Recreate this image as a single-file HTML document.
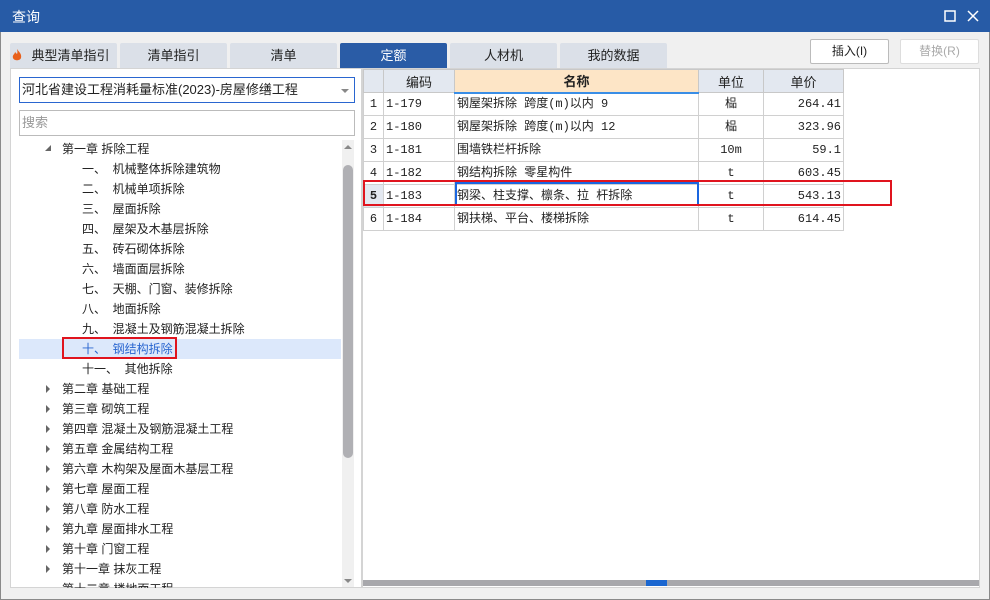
<!DOCTYPE html>
<html><head><meta charset="utf-8"><style>
*{box-sizing:border-box;margin:0;padding:0}
body{width:990px;height:600px;background:#f0f0f0;font-family:"Liberation Sans","Noto Sans CJK SC",sans-serif;font-size:12px;color:#222;position:relative;overflow:hidden}
.abs{position:absolute}
.title{left:0;top:0;width:990px;height:32px;background:#275ba6;color:#fff;font-size:14px;line-height:34px;padding-left:12px}
.tab{top:43px;height:25px;width:107px;background:#dbe0e8;text-align:center;line-height:25px;font-size:13px;border-radius:2px 2px 0 0}
.tab.on{background:#2a5ca6;color:#fff}
.btn{top:39px;width:79px;height:25px;border:1px solid #bbb;background:#fff;border-radius:2px;text-align:center;line-height:23px;font-size:12px}
.tree div{position:absolute;height:20px;line-height:20px;font-size:12px;white-space:nowrap}
table{border-collapse:collapse;position:absolute;left:363px;top:69px;table-layout:fixed}
td{border:1px solid #d0d0d0;height:23px;line-height:21px;font-size:12px;padding:0 2px;font-family:"Liberation Mono","Noto Sans CJK SC",monospace;overflow:hidden;white-space:nowrap}
th{border:1px solid #c8c8c8;height:23px;font-weight:normal;background:#e3e8f0;font-size:13px}
.arr{position:absolute;width:0;height:0;border-top:4px solid transparent;border-bottom:4px solid transparent;border-left:4px solid #666}
</style></head><body>
<div class="abs" style="left:0;top:0;width:990px;height:600px;border:1px solid #8a8a8a"></div>
<div class="abs title">查询
<svg class="abs" style="left:944px;top:10px" width="12" height="12"><rect x="1" y="1" width="10" height="10" fill="none" stroke="#fff" stroke-width="1.5"/></svg>
<svg class="abs" style="left:967px;top:10px" width="12" height="12"><path d="M1 1L11 11M11 1L1 11" stroke="#fff" stroke-width="1.5"/></svg>
</div>
<div class="abs tab" style="left:10px;padding-left:14px">典型清单指引</div>
<svg class="abs" style="left:12px;top:48px" width="10" height="14"><path d="M5 1C7 4 10 6 9 10C8 13 2 13 1 10C0 7 3 6 3 4C4 5 5 6 5 6C6 4 5 2 5 1Z" fill="#e8601c"/></svg>
<div class="abs tab" style="left:120px">清单指引</div>
<div class="abs tab" style="left:230px">清单</div>
<div class="abs tab on" style="left:340px">定额</div>
<div class="abs tab" style="left:450px">人材机</div>
<div class="abs tab" style="left:560px">我的数据</div>
<div class="abs btn" style="left:810px">插入(I)</div>
<div class="abs btn" style="left:900px;color:#aaa;border-color:#ddd">替换(R)</div>

<div class="abs" style="left:10px;top:68px;width:352px;height:520px;background:#fff;border:1px solid #d4d4d4"></div>
<div class="abs" style="left:19px;top:77px;width:336px;height:26px;border:1px solid #2a66d0;font-size:13px;line-height:24px;padding-left:2px">河北省建设工程消耗量标准(2023)-房屋修缮工程
<div class="abs" style="right:5px;top:11px;border-left:4px solid transparent;border-right:4px solid transparent;border-top:4px solid #888"></div></div>
<div class="abs" style="left:19px;top:110px;width:336px;height:26px;border:1px solid #bbb;font-size:13px;line-height:24px;padding-left:2px;color:#999">搜索</div>
<div class="abs" style="left:19px;top:339px;width:322px;height:20px;background:#dce8fb"></div>
<div class="abs" style="left:62px;top:337px;width:115px;height:22px;border:2px solid #e0141e"></div>
<div class="tree">
<div class="abs" style="left:45px;top:145px;border-left:6px solid transparent;border-bottom:6px solid #666;height:0;width:0"></div>
<div style="left:62px;top:139px">第一章 拆除工程</div>
<div style="left:82px;top:159px">一、&nbsp;&nbsp;机械整体拆除建筑物</div>
<div style="left:82px;top:179px">二、&nbsp;&nbsp;机械单项拆除</div>
<div style="left:82px;top:199px">三、&nbsp;&nbsp;屋面拆除</div>
<div style="left:82px;top:219px">四、&nbsp;&nbsp;屋架及木基层拆除</div>
<div style="left:82px;top:239px">五、&nbsp;&nbsp;砖石砌体拆除</div>
<div style="left:82px;top:259px">六、&nbsp;&nbsp;墙面面层拆除</div>
<div style="left:82px;top:279px">七、&nbsp;&nbsp;天棚、门窗、装修拆除</div>
<div style="left:82px;top:299px">八、&nbsp;&nbsp;地面拆除</div>
<div style="left:82px;top:319px">九、&nbsp;&nbsp;混凝土及钢筋混凝土拆除</div>
<div style="left:82px;top:339px;color:#2a66d0">十、&nbsp;&nbsp;钢结构拆除</div>
<div style="left:82px;top:359px">十一、&nbsp;&nbsp;其他拆除</div>
<div style="left:62px;top:379px">第二章 基础工程</div>
<div style="left:62px;top:399px">第三章 砌筑工程</div>
<div style="left:62px;top:419px">第四章 混凝土及钢筋混凝土工程</div>
<div style="left:62px;top:439px">第五章 金属结构工程</div>
<div style="left:62px;top:459px">第六章 木构架及屋面木基层工程</div>
<div style="left:62px;top:479px">第七章 屋面工程</div>
<div style="left:62px;top:499px">第八章 防水工程</div>
<div style="left:62px;top:519px">第九章 屋面排水工程</div>
<div style="left:62px;top:539px">第十章 门窗工程</div>
<div style="left:62px;top:559px">第十一章 抹灰工程</div>
<div style="left:62px;top:579px">第十二章 楼地面工程</div>
</div>
<div class="arr" style="left:46px;top:385px"></div><div class="arr" style="left:46px;top:405px"></div><div class="arr" style="left:46px;top:425px"></div><div class="arr" style="left:46px;top:445px"></div><div class="arr" style="left:46px;top:465px"></div><div class="arr" style="left:46px;top:485px"></div><div class="arr" style="left:46px;top:505px"></div><div class="arr" style="left:46px;top:525px"></div><div class="arr" style="left:46px;top:545px"></div><div class="arr" style="left:46px;top:565px"></div>
<div class="abs" style="left:11px;top:588px;width:350px;height:11px;background:#f0f0f0"></div>
<div class="abs" style="left:342px;top:140px;width:12px;height:447px;background:#f0f0f0"></div>
<div class="abs" style="left:343px;top:165px;width:10px;height:293px;background:#b0b0b4;border-radius:5px"></div>
<div class="abs" style="left:344px;top:145px;border-left:4px solid transparent;border-right:4px solid transparent;border-bottom:4px solid #888"></div>
<div class="abs" style="left:344px;top:579px;border-left:4px solid transparent;border-right:4px solid transparent;border-top:4px solid #888"></div>

<div class="abs" style="left:362px;top:68px;width:618px;height:520px;background:#fff;border:1px solid #d4d4d4"></div>
<table>
<colgroup><col style="width:20px"><col style="width:71px"><col style="width:244px"><col style="width:65px"><col style="width:80px"></colgroup>
<tr><th></th><th>编码</th><th style="background:#fde5c6;font-weight:bold;border-bottom:2px solid #3a8ee6">名称</th><th>单位</th><th>单价</th></tr>
<tr><td style="text-align:center">1</td><td>1-179</td><td>钢屋架拆除 跨度(m)以内 9</td><td style="text-align:center">榀</td><td style="text-align:right">264.41</td></tr>
<tr><td style="text-align:center">2</td><td>1-180</td><td>钢屋架拆除 跨度(m)以内 12</td><td style="text-align:center">榀</td><td style="text-align:right">323.96</td></tr>
<tr><td style="text-align:center">3</td><td>1-181</td><td>围墙铁栏杆拆除</td><td style="text-align:center">10m</td><td style="text-align:right">59.1</td></tr>
<tr><td style="text-align:center">4</td><td>1-182</td><td>钢结构拆除 零星构件</td><td style="text-align:center">t</td><td style="text-align:right">603.45</td></tr>
<tr><td style="text-align:center;background:#e3e8f0;font-weight:bold">5</td><td>1-183</td><td>钢梁、柱支撑、檩条、拉 杆拆除</td><td style="text-align:center">t</td><td style="text-align:right">543.13</td></tr>
<tr><td style="text-align:center">6</td><td>1-184</td><td>钢扶梯、平台、楼梯拆除</td><td style="text-align:center">t</td><td style="text-align:right">614.45</td></tr>
</table>
<div class="abs" style="left:455px;top:182px;width:244px;height:24px;border:2px solid #1a66e0"></div>
<div class="abs" style="left:363px;top:180px;width:529px;height:26px;border:2px solid #e0141e"></div>
<div class="abs" style="left:363px;top:580px;width:616px;height:6px;background:#a8a8ac"></div>
<div class="abs" style="left:646px;top:580px;width:21px;height:6px;background:#1a66d0"></div>
</body></html>
